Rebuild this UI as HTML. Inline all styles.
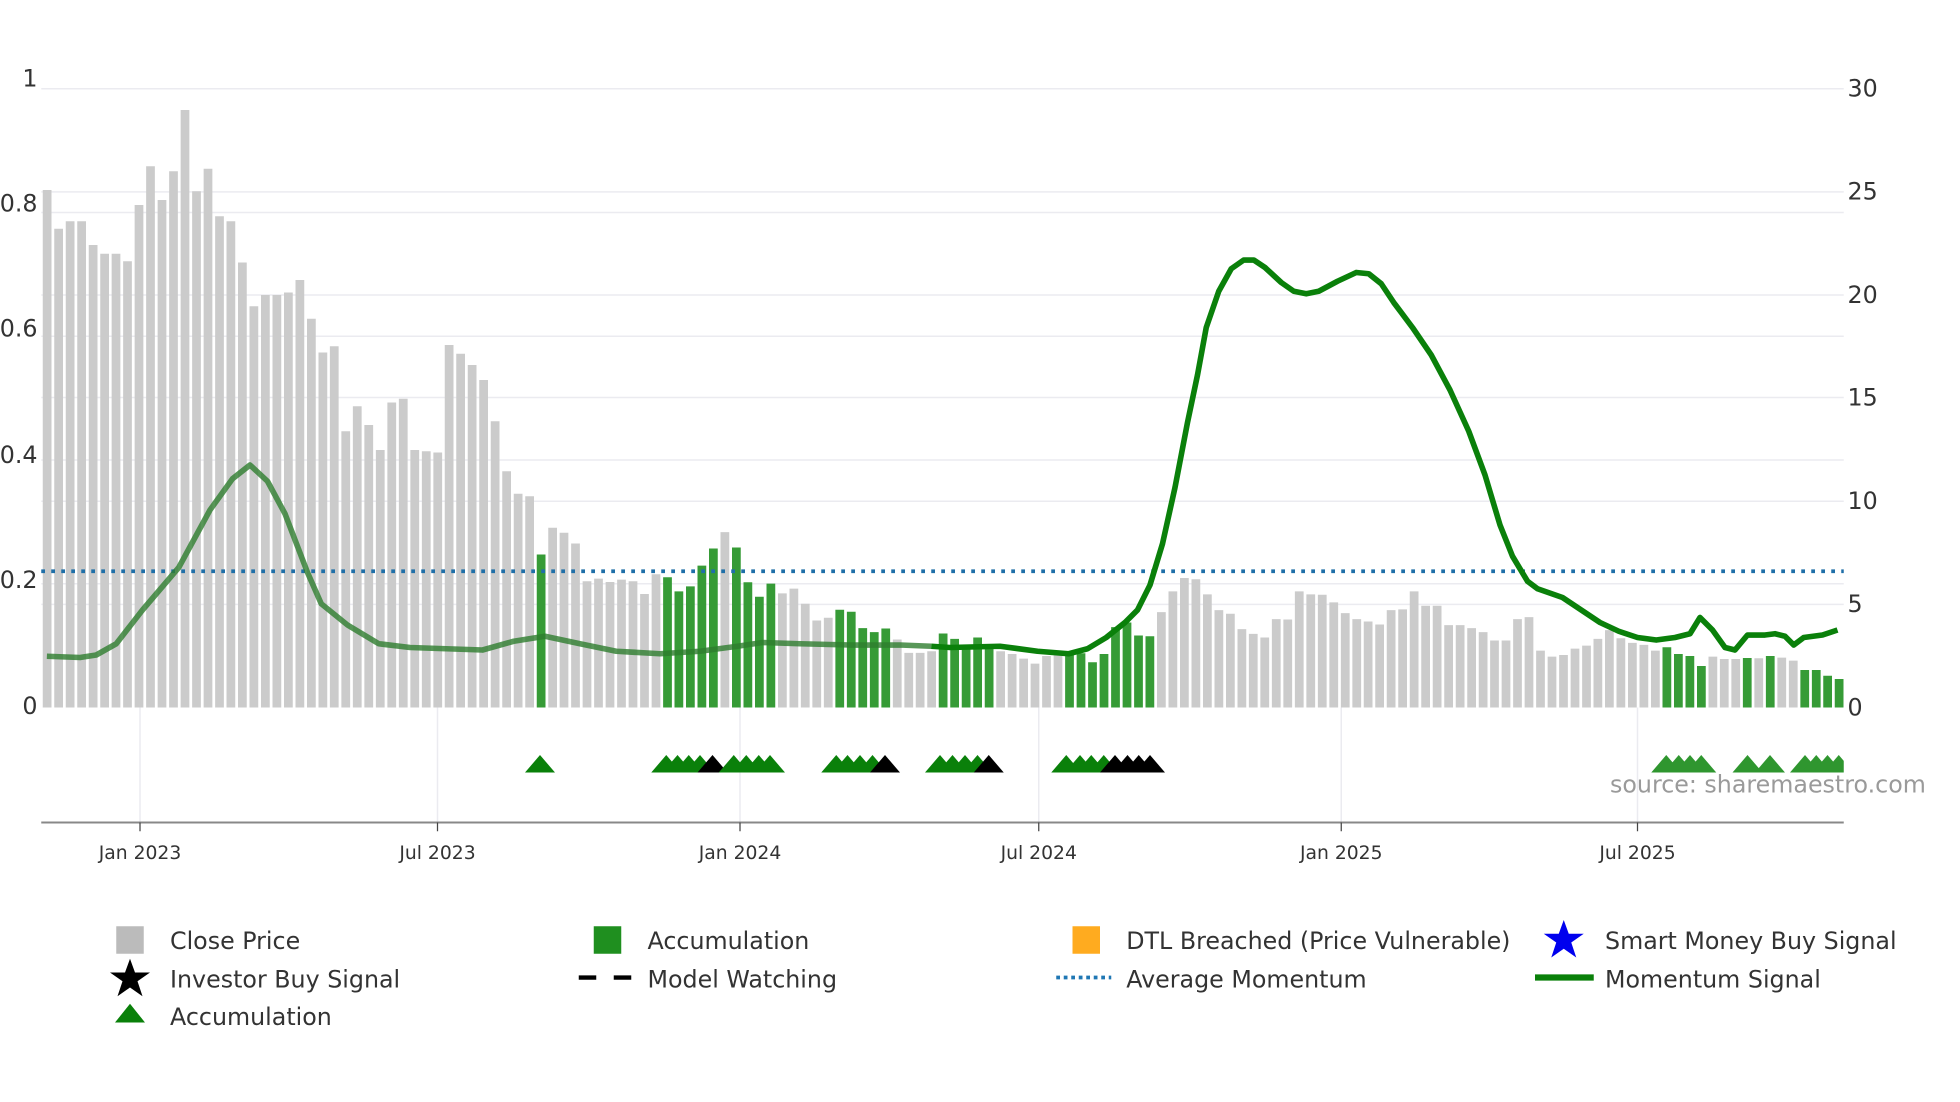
<!DOCTYPE html>
<html><head><meta charset="utf-8"><style>
html,body{margin:0;padding:0;background:#fff;width:1960px;height:1102px;overflow:hidden}
svg{display:block}
text{font-family:"DejaVu Sans","Liberation Sans",sans-serif;fill:#333}
</style></head><body>
<svg id="s" width="1960" height="1102" viewBox="0 0 1568 881.6" xmlns="http://www.w3.org/2000/svg">
<g id="grid" stroke="#ebebf0" stroke-width="1.2"></g>
<g id="bars"></g>
<g id="lines"></g>
<g id="tri"></g>
<g id="axis"></g>
<g id="legend">
<rect x="93" y="741" width="22" height="22" fill="#bbb"/>
<text x="136" y="759" font-size="19">Close Price</text>
<rect x="475" y="741" width="22" height="22" fill="#1f8f1f"/>
<text x="518" y="759" font-size="19">Accumulation</text>
<rect x="858" y="741" width="22" height="22" fill="#ffab1f"/>
<text x="901" y="759" font-size="19">DTL Breached (Price Vulnerable)</text>
<polygon fill="#0000ee" points="1251,736 1255,747 1267,747 1257,754 1261,766 1251,759 1241,766 1245,754 1235,747 1247,747"/>
<text x="1284" y="759" font-size="19">Smart Money Buy Signal</text>
<polygon fill="#000" points="104,767 108,778 120,778 110,785 114,797 104,790 94,797 98,785 88,778 100,778"/>
<text x="136" y="790" font-size="19">Investor Buy Signal</text>
<line x1="463" y1="782" x2="505" y2="782" stroke="#000" stroke-width="3.5" stroke-dasharray="14,14"/>
<text x="518" y="790" font-size="19">Model Watching</text>
<line x1="845" y1="782" x2="889" y2="782" stroke="#1f77b4" stroke-width="3" stroke-dasharray="3,3"/>
<text x="901" y="790" font-size="19">Average Momentum</text>
<line x1="1228" y1="782" x2="1275" y2="782" stroke="#0a800a" stroke-width="5"/>
<text x="1284" y="790" font-size="19">Momentum Signal</text>
<polygon fill="#0a800a" points="92,818 104,803 116,818"/>
<text x="136" y="820" font-size="19">Accumulation</text>
</g>
</svg>
<script>
var NS="http://www.w3.org/2000/svg";
function el(p,t,a,txt){var e=document.createElementNS(NS,t);for(var k in a)e.setAttribute(k,a[k]);if(txt!=null)e.textContent=txt;document.getElementById(p).appendChild(e);return e;}
var base=566,L=33,R=1475;
[71,170,269,368,467,153.5,236,318,401,483.5].forEach(function(y){el("grid","line",{x1:L,x2:R,y1:y,y2:y});});
[112,350,592,831,1073,1310].forEach(function(x){el("grid","line",{x1:x,x2:x,y1:566,y2:658});});
var h=[414,383,389,389,370,363,363,357,402,433,406,429,478,413,431,393,389,356,321,330,330,332,342,311,284,289,221,241,226,206,244,247,206,205,204,290,283,274,262,229,189,171,169,
122.4,143.8,139.8,131.2,101,103.1,100.4,102.3,101,90.8,106.6,104.2,92.9,96.9,113.5,127.2,140.3,128,100.2,88.6,99.1,91.3,95.1,83,69.6,71.8,78.2,76.6,63.5,60.3,63.2,54.4,43.7,43.7,45,59.2,54.9,50.3,56,47.4,45,42.8,39.1,35.1,41.2,43.4,43.4,43.4,36.2,42.8,64.3,68,57.6,
57,76.3,92.9,103.6,102.6,90.5,77.9,75,62.7,58.9,56,70.7,70.4,92.9,90.5,90.2,84.1,75.5,70.7,68.8,66.4,77.9,78.5,92.9,81.4,81.4,65.9,65.9,63.5,60.3,53.6,53.6,70.7,72.3,45.5,40.7,42,47.1,49.5,54.9,61.9,55.4,51.7,50.1,45.5,48.2,42.8,41.2,33.2,40.7,38.8,38.8,39.6,39.4,41.2,39.9,37.5,30,30,25.4,22.8];
var g={43:1,54:1,55:1,56:1,57:1,58:1,60:1,61:1,62:1,63:1,69:1,70:1,71:1,72:1,73:1,78:1,79:1,80:1,81:1,82:1,89:1,90:1,91:1,92:1,93:1,94:1,95:1,96:1,141:1,142:1,143:1,144:1,148:1,150:1,153:1,154:1,155:1,156:1};
for(var i=0;i<h.length;i++){var x=L+1.2+i*9.19;el("bars","rect",{x:x.toFixed(1),y:(base-h[i]).toFixed(1),width:7,height:h[i],fill:g[i]?"#369b36":"#cbcbcb"});}
el("lines","line",{x1:L,x2:R,y1:457,y2:457,stroke:"#1f6fa8","stroke-width":3,"stroke-dasharray":"3,5"});
var p1=[[37.5,525],[64,526],[77,524],[93,515],[114,488],[143,454],[168,408],[186,383],[200,372],[214,385],[228,411],[246,458],[257,483],[278,500],[303,515],[328,518],[386,520],[411,513],[436,509],[464,515],[493,521],[528,523],[560,521],[590,517],[610,514],[640,515],[680,516],[720,516],[745,517]];
var p2=[[745,517],[760,518],[800,517],[830,521],[855,523],[870,519],[885,510],[900,498],[910,488],[920,468],[930,435],[940,390],[950,338],[958,300],[965,262],[975,233],[985,215],[995,208],[1003,208],[1012,214],[1025,226],[1035,233],[1045,235],[1055,233],[1070,225],[1085,218],[1095,219],[1105,227],[1115,242],[1130,262],[1145,284],[1160,312],[1175,345],[1188,380],[1200,420],[1210,445],[1222,465],[1230,471],[1250,478],[1265,488],[1280,498],[1295,505],[1310,510],[1325,512],[1340,510],[1352,507],[1360,494],[1370,504],[1380,518],[1388,520],[1398,508],[1412,508],[1420,507],[1428,509],[1435,516],[1443,510],[1458,508],[1470,504]];
function pts(a){return a.map(function(p){return p.join(",")}).join(" ");}
el("lines","polyline",{points:pts(p1),fill:"none",stroke:"#2e7d2e","stroke-opacity":0.8,"stroke-width":4.5,"stroke-linejoin":"round"});
el("lines","polyline",{points:pts(p2),fill:"none",stroke:"#0a800a","stroke-width":4.5,"stroke-linejoin":"round"});
var G="#0a800a",B="#000",G2="#2f962f";
var tr=[[432,G],[533,G],[542,G],[551,G],[560,G],[570,B],[587,G],[597,G],[607,G],[616,G],[669,G],[678,G],[688,G],[698,G],[708,B],[752,G],[762,G],[772,G],[782,G],[791,B],[853,G],[864,G],[873,G],[883,G],[892,B],[902,B],[911,B],[920,B],[1333,G2],[1343,G2],[1352,G2],[1361,G2],[1398,G2],[1416,G2],[1444,G2],[1453,G2],[1462,G2],[1471,G2]];
var cp=el("tri","clipPath",{id:"cp"});var r=document.createElementNS(NS,"rect");r.setAttribute("x",0);r.setAttribute("y",590);r.setAttribute("width",R);r.setAttribute("height",40);cp.appendChild(r);
var tg=el("tri","g",{"clip-path":"url(#cp)"});tg.id="tg";
tr.forEach(function(t){el("tg","polygon",{points:(t[0]-12)+",618 "+t[0]+",604 "+(t[0]+12)+",618",fill:t[1]});});
el("axis","line",{x1:L,x2:R,y1:658,y2:658,stroke:"#888","stroke-width":1.6});
[["Jan 2023",112],["Jul 2023",350],["Jan 2024",592],["Jul 2024",831],["Jan 2025",1073],["Jul 2025",1310]].forEach(function(t){
el("axis","line",{x1:t[1],x2:t[1],y1:658,y2:665,stroke:"#444","stroke-width":1});
el("axis","text",{x:t[1],y:687,"font-size":15,"text-anchor":"middle"},t[0]);});
[["1",64],["0.8",164],["0.6",264],["0.4",365],["0.2",465],["0",566]].forEach(function(t){el("axis","text",{x:30,y:t[1],"font-size":19,"text-anchor":"end","dominant-baseline":"middle"},t[0]);});
[["30",71],["25",153.5],["20",236],["15",318],["10",401],["5",483.5],["0",566]].forEach(function(t){el("axis","text",{x:1478,y:t[1]+1,"font-size":19,"dominant-baseline":"middle"},t[0]);});
el("axis","text",{x:1288,y:634,"font-size":19,style:"fill:#9a9a9a"},"source: sharemaestro.com");
</script>
</body></html>
